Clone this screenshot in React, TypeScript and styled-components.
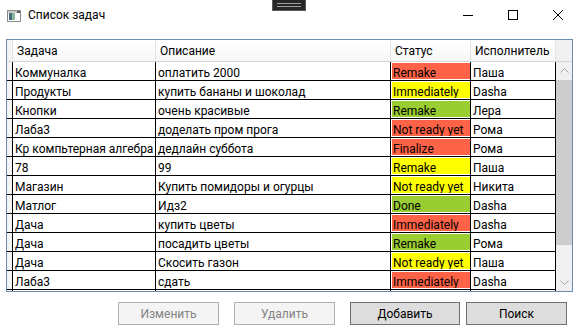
import React from "react";
import styled, { createGlobalStyle } from "styled-components";

type Status = "red" | "yellow" | "green";

interface Task {
  name: string;
  desc: string;
  status: string;
  color: Status;
  who: string;
}

const tasks: Task[] = [
  { name: "Коммуналка", desc: "оплатить 2000", status: "Remake", color: "red", who: "Паша" },
  { name: "Продукты", desc: "купить бананы и шоколад", status: "Immediately", color: "yellow", who: "Dasha" },
  { name: "Кнопки", desc: "очень красивые", status: "Remake", color: "green", who: "Лера" },
  { name: "Лаба3", desc: "доделать пром прога", status: "Not ready yet", color: "red", who: "Рома" },
  { name: "Кр компьтерная алгебра", desc: "дедлайн суббота", status: "Finalize", color: "red", who: "Рома" },
  { name: "78", desc: "99", status: "Remake", color: "yellow", who: "Паша" },
  { name: "Магазин", desc: "Купить помидоры и огурцы", status: "Not ready yet", color: "yellow", who: "Никита" },
  { name: "Матлог", desc: "Идз2", status: "Done", color: "green", who: "Dasha" },
  { name: "Дача", desc: "купить цветы", status: "Immediately", color: "red", who: "Dasha" },
  { name: "Дача", desc: "посадить цветы", status: "Remake", color: "green", who: "Рома" },
  { name: "Дача", desc: "Скосить газон", status: "Not ready yet", color: "yellow", who: "Паша" },
  { name: "Лаба3", desc: "сдать", status: "Immediately", color: "red", who: "Dasha" },
  // only the top edge of this row is visible under the header of the list
  { name: "", desc: "", status: "", color: "green", who: "" },
];

const statusColors: Record<Status, string> = {
  red: "#ff6347",
  yellow: "#ffff00",
  green: "#9acd32",
};

const GlobalStyle = createGlobalStyle`
  html, body {
    margin: 0;
    padding: 0;
    background: #ffffff;
  }
  body {
    font-family: Roboto, "Noto Sans", "DejaVu Sans", sans-serif;
    font-size: 12px;
    color: #000;
  }
`;

function App() {
  return (
    <Window>
      <GlobalStyle />
      <DebugBar>
        <span />
        <span />
      </DebugBar>

      <TitleBar>
        <AppIcon width="14" height="12" viewBox="0 0 14 12">
          <rect x="0.5" y="0.5" width="13" height="11" fill="#fff" stroke="#8c8c8c" />
          <rect x="1" y="1" width="12" height="2" fill="#c9c9c9" />
          <rect x="2" y="3" width="3" height="7" fill="#3f6f7c" />
          <rect x="5" y="3" width="3" height="7" fill="#8fb89a" />
          <rect x="10" y="1" width="3" height="2" fill="#5a5a5a" />
        </AppIcon>
        <Title>Список задач</Title>
        <Controls>
          <CtrlButton>
            <svg width="10" height="10" viewBox="0 0 10 10">
              <line x1="0" y1="5.5" x2="10" y2="5.5" stroke="#000" strokeWidth="1" />
            </svg>
          </CtrlButton>
          <CtrlButton>
            <svg width="10" height="10" viewBox="0 0 10 10">
              <rect x="0.5" y="0.5" width="9" height="9" fill="none" stroke="#000" strokeWidth="1" />
            </svg>
          </CtrlButton>
          <CtrlButton>
            <svg width="10" height="10" viewBox="0 0 10 10">
              <path d="M0 0 L10 10 M10 0 L0 10" stroke="#000" strokeWidth="1" />
            </svg>
          </CtrlButton>
        </Controls>
      </TitleBar>

      <Grid>
        <HeaderRow>
          <Corner />
          <HeaderCell>Задача</HeaderCell>
          <HeaderCell>Описание</HeaderCell>
          <HeaderCell>Статус</HeaderCell>
          <HeaderCell>Исполнитель</HeaderCell>
          <HeaderFiller />
        </HeaderRow>

        <GridBody>
          <Rows>
            {tasks.map((t, i) => (
              <Row key={i}>
                <RowHeader />
                <Cell>{t.name}</Cell>
                <Cell>{t.desc}</Cell>
                <Cell $status>
                  <StatusBox $bg={statusColors[t.color]}>{t.status}</StatusBox>
                </Cell>
                <Cell>{t.who}</Cell>
              </Row>
            ))}
          </Rows>

          <ScrollBar>
            <ArrowBox>
              <svg width="9" height="5" viewBox="0 0 9 5">
                <path d="M0.5 4.5 L4.5 0.5 L8.5 4.5" fill="none" stroke="#a6a6a6" strokeWidth="1" />
              </svg>
            </ArrowBox>
            <Track>
              <Thumb />
            </Track>
            <ArrowBox>
              <svg width="9" height="5" viewBox="0 0 9 5">
                <path d="M0.5 0.5 L4.5 4.5 L8.5 0.5" fill="none" stroke="#a6a6a6" strokeWidth="1" />
              </svg>
            </ArrowBox>
          </ScrollBar>
        </GridBody>
      </Grid>

      <ButtonBar>
        <Button disabled $w={101}>Изменить</Button>
        <Button disabled $w={101} $ml={15}>Удалить</Button>
        <Button $w={110} $ml={15}>Добавить</Button>
        <Button $w={101} $ml={6}>Поиск</Button>
      </ButtonBar>
    </Window>
  );
}

const Window = styled.div`
  position: relative;
  width: 580px;
  height: 335px;
  background: #ffffff;
  display: flex;
  flex-direction: column;
  overflow: hidden;
`;

const DebugBar = styled.div`
  position: absolute;
  left: 272px;
  top: -1px;
  width: 34px;
  height: 12px;
  box-sizing: border-box;
  background: #262626;
  border: 1px solid #5a5a5a;
  display: flex;
  flex-direction: column;
  align-items: center;
  justify-content: center;
  gap: 2px;

  & span {
    display: block;
    width: 24px;
    height: 1px;
    background: #a0a0a0;
  }
`;

const TitleBar = styled.div`
  height: 30px;
  display: flex;
  align-items: center;
  padding-left: 7px;
`;

const AppIcon = styled.svg`
  margin-right: 7px;
  margin-top: 1px;
`;

const Title = styled.div`
  font-family: Roboto, "Noto Sans", sans-serif;
  font-size: 12px;
  color: #000;
  flex: 1;
`;

const Controls = styled.div`
  display: flex;
  height: 30px;
`;

const CtrlButton = styled.div`
  width: 45px;
  height: 30px;
  display: flex;
  align-items: center;
  justify-content: center;
`;

const Grid = styled.div`
  margin: 9px 0 0 6px;
  width: 567px;
  height: 253px;
  box-sizing: border-box;
  border: 1px solid #688caf;
  display: flex;
  flex-direction: column;
  overflow: hidden;
`;

const columns = "6px 143px 235px 80px 85px";

const HeaderRow = styled.div`
  display: grid;
  grid-template-columns: ${columns} 1fr;
  height: 22px;
  flex: none;
  box-sizing: border-box;
  border-bottom: 1px solid #d5d5d5;
  background: linear-gradient(#ffffff, #f7f7f7);
`;

const Corner = styled.div`
  background: #f4f4f4;
  border-right: 1px solid #e3e3e3;
`;

const HeaderCell = styled.div`
  box-sizing: border-box;
  padding-left: 4px;
  border-right: 1px solid #e3e3e3;
  display: flex;
  align-items: center;
  white-space: nowrap;
  overflow: hidden;
`;

const HeaderFiller = styled.div`
  background: #f0f0f0;
`;

const GridBody = styled.div`
  flex: 1;
  display: flex;
  min-height: 0;
`;

const Rows = styled.div`
  width: 549px;
  overflow: hidden;
`;

const Row = styled.div`
  display: grid;
  grid-template-columns: ${columns};
  height: 19px;
  box-sizing: border-box;
  border-bottom: 1px solid #000;
`;

const RowHeader = styled.div`
  background: #f4f4f4;
  border-right: 1px solid #000;
`;

const Cell = styled.div<{ $status?: boolean }>`
  box-sizing: border-box;
  border-right: 1px solid #000;
  padding: ${(p) => (p.$status ? "0" : "3px 0 0 2px")};
  display: flex;
  align-items: flex-start;
  white-space: nowrap;
  overflow: hidden;
  line-height: 16px;
`;

const StatusBox = styled.div<{ $bg: string }>`
  align-self: stretch;
  flex: 1;
  margin: 1px 0 1px 1px;
  padding: 2px 0 0 1px;
  background: ${(p) => p.$bg};
  line-height: 16px;
  white-space: nowrap;
  overflow: hidden;
`;

const ScrollBar = styled.div`
  width: 16px;
  background: #f0f0f0;
  display: flex;
  flex-direction: column;
`;

const ArrowBox = styled.div`
  height: 17px;
  flex: none;
  display: flex;
  align-items: center;
  justify-content: center;
`;

const Track = styled.div`
  flex: 1;
  padding: 1px 0 0;
  display: flex;
  flex-direction: column;
`;

const Thumb = styled.div`
  height: 165px;
  background: #cdcdcd;
`;

const ButtonBar = styled.div`
  display: flex;
  margin-top: 10px;
  padding-left: 118px;
`;

const Button = styled.button<{ $w: number; $ml?: number }>`
  width: ${(p) => p.$w}px;
  height: 23px;
  margin-left: ${(p) => p.$ml ?? 0}px;
  box-sizing: border-box;
  padding: 0;
  font-family: Roboto, "Noto Sans", sans-serif;
  font-size: 12px;
  color: #000;
  background: #dddddd;
  border: 1px solid #707070;
  border-radius: 0;

  &:disabled {
    color: #838383;
    background: #f4f4f4;
    border-color: #adb2b5;
  }
`;

export default App;
